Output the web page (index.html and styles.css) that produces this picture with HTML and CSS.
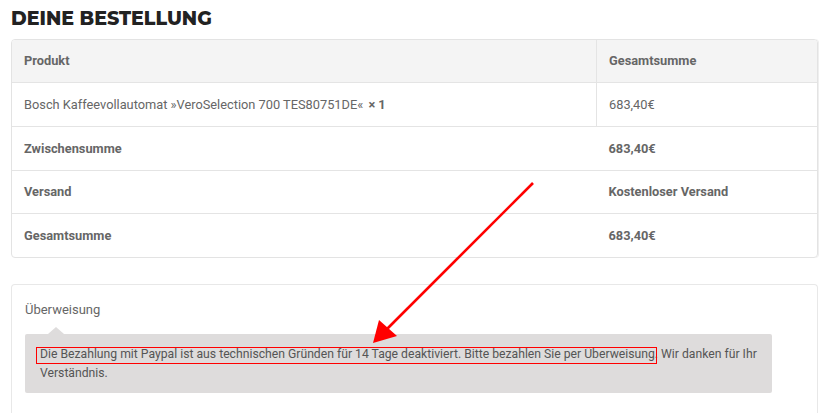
FILE: index.html
```html
<!DOCTYPE html>
<html lang="de">
<head>
<meta charset="utf-8">
<title>Deine Bestellung</title>
<link rel="stylesheet" href="styles.css">
</head>
<body>
<div class="page">
  <h1 class="title">DEINE BESTELLUNG</h1>
  <div class="order">
    <table class="order-table">
      <thead>
        <tr><th class="col-product">Produkt</th><th class="col-total">Gesamtsumme</th></tr>
      </thead>
      <tbody>
        <tr><td class="col-product">Bosch Kaffeevollautomat »VeroSelection 700 TES80751DE« <strong class="qty">× 1</strong></td><td class="col-total">683,40€</td></tr>
      </tbody>
      <tfoot>
        <tr><th class="col-product">Zwischensumme</th><td class="col-total strong">683,40€</td></tr>
        <tr class="short"><th class="col-product">Versand</th><td class="col-total strong">Kostenloser Versand</td></tr>
        <tr><th class="col-product">Gesamtsumme</th><td class="col-total strong">683,40€</td></tr>
      </tfoot>
    </table>
  </div>
  <div class="payment">
    <div class="method">Überweisung</div>
    <div class="method-box">Die Bezahlung mit Paypal ist aus technischen Gründen für 14 Tage deaktiviert. Bitte bezahlen Sie per Überweisung. Wir danken für Ihr Verständnis.</div>
  </div>
  <svg class="annotation" width="829" height="413" viewBox="0 0 829 413" aria-hidden="true">
    <rect x="36.5" y="347.5" width="620" height="16" fill="none" stroke="#ff0000" stroke-width="1"/>
    <line x1="533" y1="183" x2="386" y2="330" stroke="#ff0000" stroke-width="2.6"/>
    <polygon points="373,343 379,320 397,336" fill="#ff0000"/>
  </svg>
</div>
</body>
</html>
```
FILE: styles.css
```css
html, body {
  margin: 0;
  padding: 0;
  background: #ffffff;
}
body {
  font-family: Roboto, "Liberation Sans", sans-serif;
  color: #666666;
  overflow: hidden;
}
.page {
  position: relative;
  box-sizing: border-box;
  padding: 5px 11px 0 11px;
  height: 413px;
  overflow: hidden;
}
.title {
  margin: 0 0 6px 0;
  font-family: Montserrat, Inter, "Open Sans", sans-serif;
  font-weight: 800;
  font-size: 19px;
  line-height: 28px;
  color: #222222;
}
.order {
  border: 1px solid #e3e3e3;
  border-radius: 4px;
  overflow: hidden;
  box-shadow: 1px 0 0 #efefef;
}
.order-table {
  width: 100%;
  border-collapse: collapse;
  font-size: 12.8px;
}
.order-table th,
.order-table td {
  text-align: left;
  padding: 0 12px;
  height: 43px;
  line-height: 16px;
  border-top: 1px solid #e4e4e4;
  font-weight: normal;
}
.order-table thead th {
  border-top: none;
  background: #f4f4f4;
  font-weight: bold;
  height: 42px;
}
.order-table .short th,
.order-table .short td { height: 42px; }
.order-table th { font-weight: bold; }
.order-table .col-product { width: 560px; }
.order-table .col-total { border-left: 1px solid #e4e4e4; }
.order-table tfoot .col-total { border-left: none; }
.order-table .strong { font-weight: bold; }
.qty { font-weight: bold; margin-left: 2px; }

.payment {
  margin-top: 26px;
  border: 1px solid #e8e8e8;
  border-bottom: none;
  border-radius: 4px 4px 0 0;
  padding: 16px 45px 30px 13px;
}
.method {
  font-size: 13px;
  line-height: 18px;
  color: #666666;
}
.method-box {
  position: relative;
  margin-top: 15px;
  background: #dedcdc;
  border-radius: 2px;
  padding: 11px 0 10px 15px;
  font-size: 12.2px;
  line-height: 19px;
  color: #555555;
}
.method-box::before {
  content: "";
  position: absolute;
  left: 23px;
  top: -7px;
  border-left: 8px solid transparent;
  border-right: 8px solid transparent;
  border-bottom: 7px solid #dedcdc;
}
.annotation {
  position: absolute;
  left: 0;
  top: 0;
  pointer-events: none;
}
```
